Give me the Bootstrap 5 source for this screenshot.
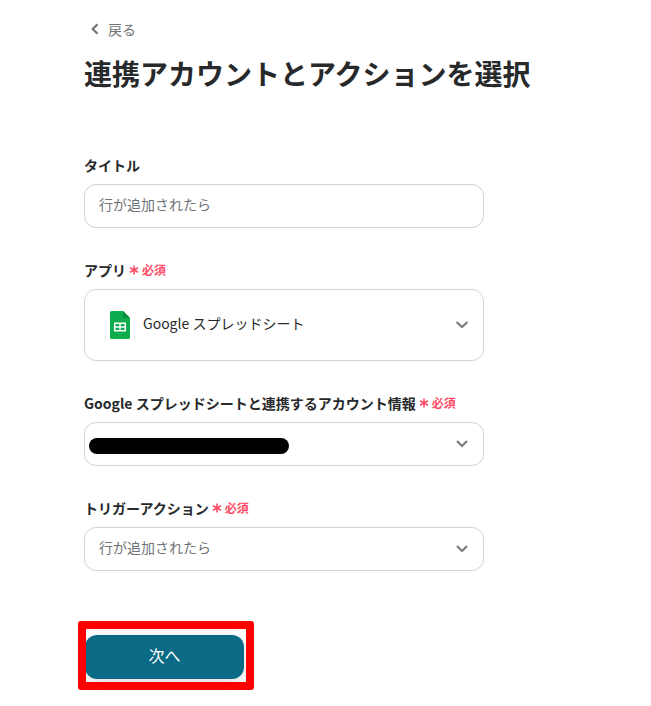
<!DOCTYPE html>
<html lang="ja">
<head>
    <meta charset="UTF-8">
    <meta name="viewport" content="width=device-width, initial-scale=1.0">
    <link href="https://cdn.jsdelivr.net/npm/bootstrap@5.3.3/dist/css/bootstrap.min.css" rel="stylesheet">
    <title>連携アカウントとアクションを選択</title>
    <style>
        body {
            background-color: #fff;
            color: #27292b;
            font-family: "Noto Sans CJK JP", "Noto Sans", sans-serif;
            font-size: 14px;
        }
        .page-wrap {
            width: 400px;
            margin-left: 84px;
            padding-top: 19px;
            padding-bottom: 27px;
        }
        .back-link {
            color: #6f7377;
            font-size: 14px;
            line-height: 20px;
            padding-left: 6px;
            gap: 8px;
        }
        .page-title {
            font-size: 28px;
            font-weight: 700;
            line-height: 40px;
            margin: 14px 0 62px;
            white-space: nowrap;
        }
        .field-block {
            margin-bottom: 32px;
        }
        .field-label {
            font-size: 14px;
            font-weight: 700;
            line-height: 20px;
            margin-bottom: 9px;
            white-space: nowrap;
        }
        .req-mark {
            color: #ff4d67;
            font-size: 12px;
            font-weight: 700;
            margin-left: 3px;
            gap: 3px;
        }
        .field-box {
            height: 44px;
            border: 1px solid #d0d3da;
            border-radius: 12px;
            padding: 0 14px 0 14px;
            font-size: 14px;
            color: #6f7377;
        }
        .field-box.app-box {
            height: 72px;
            padding-left: 25px;
            color: #27292b;
        }
        .box-text {
            margin-bottom: 3px;
        }
        .box-text-title {
            margin-bottom: 4px;
        }
        .sheet-icon {
            margin-right: 13px;
        }
        .field-box.account-box {
            padding-left: 4px;
        }
        .masked-bar {
            width: 200px;
            height: 16px;
            margin-top: 4px;
            border-radius: 8px;
            background-color: #000;
        }
        .next-wrap {
            width: 160px;
            margin: 64px 0 0 1px;
        }
        .next-btn {
            width: 159px;
            height: 44px;
            padding-bottom: 10px;
            border: 0;
            border-radius: 12px;
            background-color: #0b6a85;
            color: #fff;
            font-size: 16px;
            box-shadow: 0 4px 16px rgba(0, 0, 0, 0.14);
        }
        .red-frame {
            position: absolute;
            left: -7px;
            top: -14px;
            width: 176px;
            height: 69px;
            border: 8px solid #ff0000;
            border-radius: 3px;
            pointer-events: none;
        }
    </style>
</head>
<body>
    <div class="page-wrap">
        <div class="back-link d-flex align-items-center">
            <svg width="10" height="12" viewBox="0 0 10 12"><path d="M7.500 1.200 2.700 6l4.800 4.800" fill="none" stroke="#6f7377" stroke-width="2.200"/></svg>
            <span>戻る</span>
        </div>
        <h1 class="page-title">連携アカウントとアクションを選択</h1>

        <div class="field-block">
            <div class="field-label">タイトル</div>
            <div class="field-box d-flex align-items-center"><span class="box-text-title">行が追加されたら</span></div>
        </div>

        <div class="field-block">
            <div class="field-label d-flex align-items-center">アプリ
                <span class="req-mark d-inline-flex align-items-center">
                    <svg width="10" height="10" viewBox="0 0 10 10"><path d="M5 .5v9M1 2.700l8 4.600M9 2.700 1 7.300" stroke="#ff4d67" stroke-width="1.600"/></svg>必須
                </span>
            </div>
            <div class="field-box app-box d-flex align-items-center justify-content-between">
                <div class="d-flex align-items-center">
                    <svg class="sheet-icon" width="20" height="28" viewBox="0 0 20 28">
                        <path d="M1.500 0H13l7 7v19.500a1.500 1.500 0 0 1-1.500 1.500h-17A1.500 1.500 0 0 1 0 26.500v-25A1.500 1.500 0 0 1 1.500 0z" fill="#0fac4e"/>
                        <path d="M13 0l7 7h-7z" fill="#0a8a3d"/>
                        <path d="M4 11.500h12v9H4z" fill="#fff"/>
                        <path d="M5.500 13h3.800v2.300H5.500zM10.700 13h3.800v2.300h-3.800zM5.500 16.700h3.800V19H5.500zM10.700 16.700h3.800V19h-3.800z" fill="#0fac4e"/>
                    </svg>
                    <span class="box-text">Google スプレッドシート</span>
                </div>
                <svg width="14" height="10" viewBox="0 0 14 10"><path d="M1.500 2l5.500 5 5.500-5" fill="none" stroke="#7a7d80" stroke-width="2.200"/></svg>
            </div>
        </div>

        <div class="field-block">
            <div class="field-label d-flex align-items-center">Google スプレッドシートと連携するアカウント情報
                <span class="req-mark d-inline-flex align-items-center">
                    <svg width="10" height="10" viewBox="0 0 10 10"><path d="M5 .5v9M1 2.700l8 4.600M9 2.700 1 7.300" stroke="#ff4d67" stroke-width="1.600"/></svg>必須
                </span>
            </div>
            <div class="field-box account-box d-flex align-items-center justify-content-between">
                <div class="masked-bar"></div>
                <svg width="14" height="10" viewBox="0 0 14 10"><path d="M2 2l5 5 5-5" fill="none" stroke="#7a7d80" stroke-width="2.200"/></svg>
            </div>
        </div>

        <div class="field-block">
            <div class="field-label d-flex align-items-center">トリガーアクション
                <span class="req-mark d-inline-flex align-items-center">
                    <svg width="10" height="10" viewBox="0 0 10 10"><path d="M5 .5v9M1 2.700l8 4.600M9 2.700 1 7.300" stroke="#ff4d67" stroke-width="1.600"/></svg>必須
                </span>
            </div>
            <div class="field-box d-flex align-items-center justify-content-between">
                <span class="box-text">行が追加されたら</span>
                <svg width="14" height="10" viewBox="0 0 14 10"><path d="M2 2l5 5 5-5" fill="none" stroke="#7a7d80" stroke-width="2.200"/></svg>
            </div>
        </div>

        <div class="next-wrap position-relative">
            <button type="button" class="btn next-btn">次へ</button>
            <div class="red-frame"></div>
        </div>
    </div>
    <script src="https://cdn.jsdelivr.net/npm/bootstrap@5.3.3/dist/js/bootstrap.bundle.min.js"></script>
</body>
</html>
